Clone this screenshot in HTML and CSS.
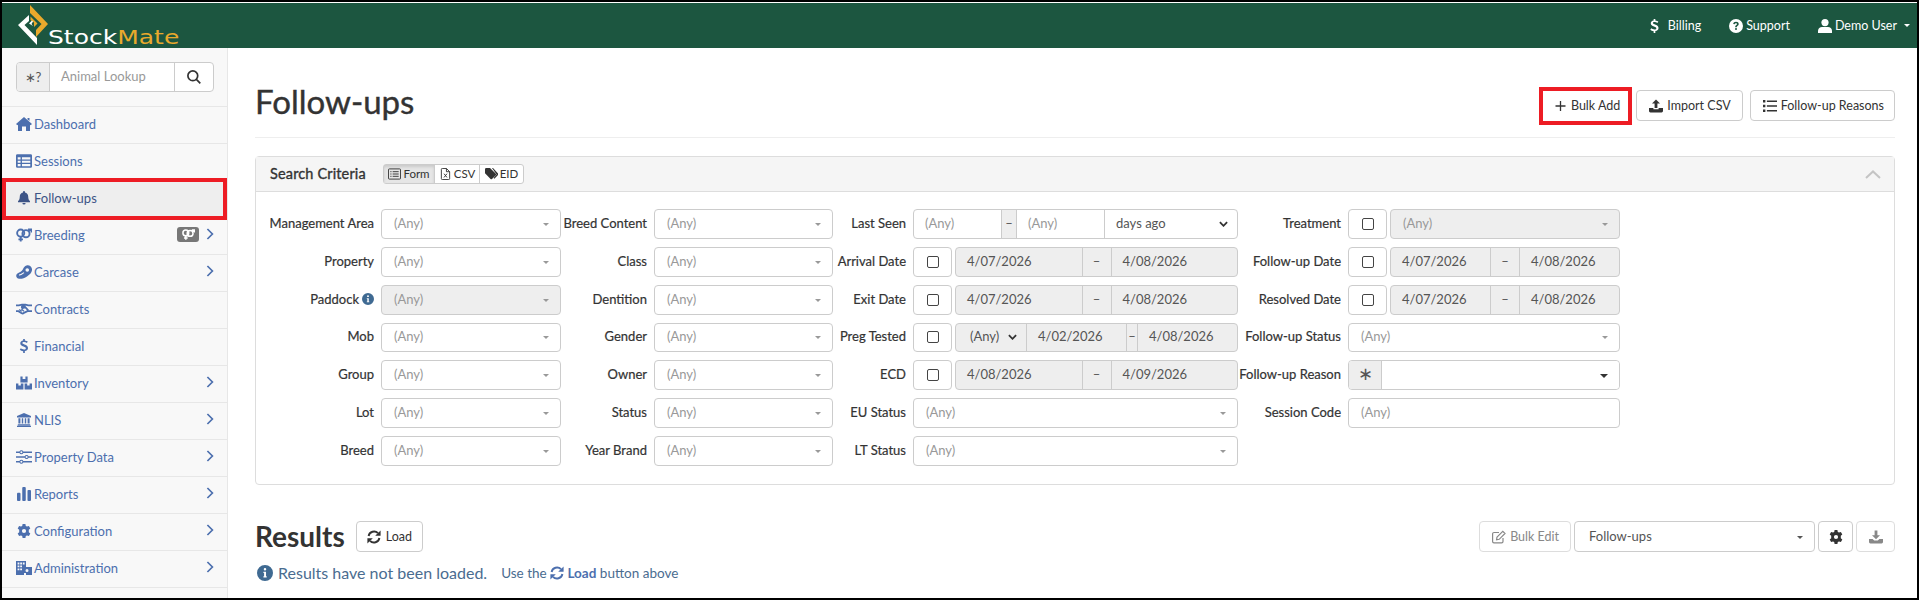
FILE: index.html
```html
<!DOCTYPE html>
<html lang="en">
<head>
    <meta charset="UTF-8">
    <title>Follow-ups</title>
    <link rel="stylesheet" href="styles.css">
</head>
<body>

<svg class="sprite" xmlns="http://www.w3.org/2000/svg">
    <symbol id="i-home" viewBox="0 0 16 14"><path d="M8 0 L16 7 L14.6 8.3 L14 7.8 V14 H10 V9.5 H6 V14 H2 V7.8 L1.4 8.3 L0 7 Z"/><path d="M11.5 1 H13.5 V4 L11.5 2.4 Z"/></symbol>
    <symbol id="i-table" viewBox="0 0 14 12"><path fill-rule="evenodd" d="M1.2 0 H12.8 A1.2 1.2 0 0 1 14 1.2 V10.8 A1.2 1.2 0 0 1 12.8 12 H1.2 A1.2 1.2 0 0 1 0 10.8 V1.2 A1.2 1.2 0 0 1 1.2 0 Z M1.5 2.8 V4.6 H4 V2.8 Z M5.2 2.8 V4.6 H12.5 V2.8 Z M1.5 5.8 V7.5 H4 V5.8 Z M5.2 5.8 V7.5 H12.5 V5.8 Z M1.5 8.7 V10.5 H4 V8.7 Z M5.2 8.7 V10.5 H12.5 V8.7 Z"/></symbol>
    <symbol id="i-bell" viewBox="0 0 12 14"><path d="M6 0 A1 1 0 0 1 7 1 V1.6 C9 2 10.2 3.6 10.2 5.6 C10.2 8.6 11.2 9.4 12 10.2 V11.2 H0 V10.2 C.8 9.4 1.8 8.6 1.8 5.6 C1.8 3.6 3 2 5 1.6 V1 A1 1 0 0 1 6 0 Z M4.4 12 H7.6 A1.6 1.6 0 0 1 4.4 12 Z"/></symbol>
    <symbol id="i-venus-mars" viewBox="0 0 17 14"><g fill="none" stroke="currentColor" stroke-width="2"><circle cx="5" cy="5" r="3.8"/><path d="M5 8.6 V14 M2.6 11.6 H7.4"/><circle cx="10.6" cy="5.6" r="3.8"/><path d="M13.2 3 L16 .9 M12.8 1 H16.4 V4.4"/></g></symbol>
    <symbol id="i-steak" viewBox="0 0 16 14"><path fill-rule="evenodd" d="M10.5 .5 C13 -.2 15.6 1.4 16 4 C16.4 7 14 9.6 11 11.4 C8 13.2 4.6 14.6 2 13.4 C-.2 12.4 -.4 9.6 1.4 8.4 C4 6.6 5.6 6.6 6.8 4.4 C7.8 2.6 8.6 1 10.5 .5 Z M11.2 3.2 A1.8 1.8 0 1 0 11.3 6.8 A1.8 1.8 0 1 0 11.2 3.2 Z M3 10.4 C4.6 10.6 6.6 9.2 8.4 8 L7.6 7.2 C6 8.4 4.4 9.4 3 9.4 Z"/></symbol>
    <symbol id="i-handshake" viewBox="0 0 17 11"><path fill="none" stroke="currentColor" stroke-width="1.9" d="M0 1.6 H3 L6.4 .9 H10 L13 1.6 H17 M0 7.8 H2.6 L6 10 C7 10.5 7.8 10.2 8.4 9.6 L12.2 7.8 H17 M9.4 .9 L6.4 3 C5.6 3.9 6.8 5 7.9 4.3 L9.6 3.3 L13 7"/><path fill="none" stroke="currentColor" stroke-width="1.4" d="M3.4 6 L6 8 M5.8 5.6 L8.4 8"/></symbol>
    <symbol id="i-dollar" viewBox="0 0 9 15"><path d="M3.6 0 H5.4 V1.6 C6.8 1.7 7.9 2.2 8.6 2.8 L7.6 4.3 C6.8 3.7 5.7 3.3 4.6 3.3 C3.4 3.3 2.8 3.7 2.8 4.3 C2.8 5 3.6 5.3 5 5.8 C7.2 6.5 8.8 7.4 8.8 9.6 C8.8 11.4 7.5 12.6 5.4 12.9 V15 H3.6 V13 C2.2 12.9 .9 12.3 0 11.5 L1.1 10 C2 10.7 3.2 11.2 4.4 11.2 C5.8 11.2 6.5 10.7 6.5 9.9 C6.5 9 5.6 8.7 4 8.1 C2 7.4 .5 6.6 .5 4.6 C.5 3 1.7 1.9 3.6 1.6 Z"/></symbol>
    <symbol id="i-boxes" viewBox="0 0 16 13"><path d="M4.4 0 H6.6 V2.6 H9.4 V0 H11.6 V6 H4.4 Z"/><path d="M0 7 H2.4 V9 H4.8 V7 H7.4 V13 H0 Z"/><path d="M8.6 7 H11.2 V9 H13.6 V7 H16 V13 H8.6 Z"/></symbol>
    <symbol id="i-bank" viewBox="0 0 14 14"><path d="M7 0 L14 3 V4.4 H0 V3 Z"/><path d="M1.4 5.2 H3.4 V10.6 H1.4 Z M4.8 5.2 H6.2 V10.6 H4.8 Z M7.8 5.2 H9.2 V10.6 H7.8 Z M10.6 5.2 H12.6 V10.6 H10.6 Z"/><path d="M.8 11.2 H13.2 V12.4 H.8 Z M0 12.8 H14 V14 H0 Z"/></symbol>
    <symbol id="i-sliders" viewBox="0 0 14 12"><path fill-rule="evenodd" d="M0 1.2 H3 A1.8 1.8 0 0 1 6.4 1.2 H14 V2.4 H6.4 A1.8 1.8 0 0 1 3 2.4 H0 Z M4.7 .9 A.9.9 0 1 0 4.7 2.7 A.9.9 0 1 0 4.7 .9 Z M0 5.4 H7.6 A1.8 1.8 0 0 1 11 5.4 H14 V6.6 H11 A1.8 1.8 0 0 1 7.6 6.6 H0 Z M9.3 5.1 A.9.9 0 1 0 9.3 6.9 A.9.9 0 1 0 9.3 5.1 Z M0 9.6 H3 A1.8 1.8 0 0 1 6.4 9.6 H14 V10.8 H6.4 A1.8 1.8 0 0 1 3 10.8 H0 Z M4.7 9.3 A.9.9 0 1 0 4.7 11.1 A.9.9 0 1 0 4.7 9.3 Z"/></symbol>
    <symbol id="i-chart" viewBox="0 0 12 12"><rect x="0" y="5" width="3" height="7" rx=".8"/><rect x="4.5" y="0" width="3" height="12" rx=".8"/><rect x="9" y="2.5" width="3" height="9.5" rx=".8"/></symbol>
    <symbol id="i-gear" viewBox="0 0 14 14"><path fill-rule="evenodd" d="M5.6 0 H8.4 L8.8 1.9 L10 2.6 L11.9 2 L13.3 4.4 L11.8 5.7 V8.3 L13.3 9.6 L11.9 12 L10 11.4 L8.8 12.1 L8.4 14 H5.6 L5.2 12.1 L4 11.4 L2.1 12 L.7 9.6 L2.2 8.3 V5.7 L.7 4.4 L2.1 2 L4 2.6 L5.2 1.9 Z M7 4.9 A2.1 2.1 0 1 0 7 9.1 A2.1 2.1 0 1 0 7 4.9 Z"/></symbol>
    <symbol id="i-admin" viewBox="0 0 16 14"><path fill-rule="evenodd" d="M0 0 H10 V6 H16 V14 H10 V12 H8 V14 H0 Z M1.6 1.6 V3.4 H3.4 V1.6 Z M4.2 1.6 V3.4 H6 V1.6 Z M6.8 1.6 V3.4 H8.6 V1.6 Z M1.6 4.4 V6.2 H3.4 V4.4 Z M4.2 4.4 V6.2 H6 V4.4 Z M1.6 7.4 V9.2 H3.4 V7.4 Z M4.2 7.4 V9.2 H6 V7.4 Z M11 8 A1.5 1.5 0 1 0 11 11 A1.5 1.5 0 1 0 11 8 Z"/></symbol>
    <symbol id="i-search" viewBox="0 0 14 14"><path fill="none" stroke="currentColor" stroke-width="1.7" d="M5.8 .9 A4.9 4.9 0 1 0 5.8 10.7 A4.9 4.9 0 1 0 5.8 .9 Z M9.4 9.4 L13.3 13.3"/></symbol>
    <symbol id="i-chevron" viewBox="0 0 8 12"><path fill="none" stroke="currentColor" stroke-width="1.7" d="M1.4 1 L6.4 6 L1.4 11"/></symbol>
    <symbol id="i-question" viewBox="0 0 14 14"><path fill-rule="evenodd" d="M7 0 A7 7 0 1 1 7 14 A7 7 0 1 1 7 0 Z M7 2.8 C5.4 2.8 4.4 3.6 4.2 4.9 L5.6 5.2 C5.8 4.6 6.2 4.2 6.9 4.2 C7.6 4.2 8 4.6 8 5 C8 5.5 7.6 5.8 7 6.2 C6.4 6.6 6.2 7 6.2 7.8 V8.2 H7.8 V7.9 C7.8 7.5 8 7.3 8.5 7 C9.2 6.5 9.7 5.9 9.7 5 C9.7 3.7 8.6 2.8 7 2.8 Z M7 9 A1 1 0 1 0 7 11 A1 1 0 1 0 7 9 Z"/></symbol>
    <symbol id="i-user" viewBox="0 0 14 14"><circle cx="7" cy="3.6" r="3.6"/><path d="M0 14 V12 C0 9.6 2 8 4 8 H10 C12 8 14 9.6 14 12 V14 Z"/></symbol>
    <symbol id="i-info" viewBox="0 0 14 14"><path fill-rule="evenodd" d="M7 0 A7 7 0 1 1 7 14 A7 7 0 1 1 7 0 Z M7 2.6 A1.1 1.1 0 1 0 7 4.8 A1.1 1.1 0 1 0 7 2.6 Z M5.6 6 V7.1 H6.2 V9.8 H5.6 V10.9 H8.5 V9.8 H7.9 V6 Z"/></symbol>
    <symbol id="i-form" viewBox="0 0 14 12"><path fill="none" stroke="currentColor" d="M1.5.5 H12.5 A1 1 0 0 1 13.5 1.5 V10.5 A1 1 0 0 1 12.5 11.5 H1.5 A1 1 0 0 1 .5 10.5 V1.5 A1 1 0 0 1 1.5.5 Z M2.5 3.5 H3.8 M5 3.5 H11.5 M2.5 6 H3.8 M5 6 H11.5 M2.5 8.5 H3.8 M5 8.5 H11.5"/></symbol>
    <symbol id="i-csv" viewBox="0 0 10 13"><path fill="none" stroke="currentColor" d="M.5 1.5 A1 1 0 0 1 1.5.5 H6 L9.5 4 V11.5 A1 1 0 0 1 8.5 12.5 H1.5 A1 1 0 0 1 .5 11.5 Z M6 .5 V4 H9.5 M3.4 6.2 L6.6 10.2 M6.6 6.2 L3.4 10.2"/></symbol>
    <symbol id="i-tag" viewBox="0 0 13 12"><path d="M0 1.2 A1.2 1.2 0 0 1 1.2 0 H5 L10.8 5.8 A1 1 0 0 1 10.8 7.2 L7 11 A1 1 0 0 1 5.6 11 L0 5.2 Z"/><path d="M7 0 H8 L13 5.4 A1.4 1.4 0 0 1 13 7 L9.4 10.8 L8.6 10 L11.6 6.4 Z"/></symbol>
    <symbol id="i-plus" viewBox="0 0 11 11"><path fill="none" stroke="currentColor" stroke-width="1.3" d="M5.5 .5 V10.5 M.5 5.5 H10.5"/></symbol>
    <symbol id="i-upload" viewBox="0 0 14 13"><path d="M7 0 L11 4 H8.4 V8.6 H5.6 V4 H3 Z"/><path d="M0 8.6 H4.4 V9.8 H9.6 V8.6 H14 V11.6 A1.4 1.4 0 0 1 12.6 13 H1.4 A1.4 1.4 0 0 1 0 11.6 Z"/></symbol>
    <symbol id="i-list" viewBox="0 0 13 11"><path d="M0 0 H2.2 V2.2 H0 Z M0 4.4 H2.2 V6.6 H0 Z M0 8.8 H2.2 V11 H0 Z M3.6 .4 H13 V1.9 H3.6 Z M3.6 4.8 H13 V6.3 H3.6 Z M3.6 9.2 H13 V10.7 H3.6 Z"/></symbol>
    <symbol id="i-sync" viewBox="0 0 14 14"><path fill="none" stroke="currentColor" stroke-width="1.9" d="M1.6 6 A5.5 5.5 0 0 1 11 3.2 M12.4 8 A5.5 5.5 0 0 1 3 10.8"/><path d="M13.6 .4 V5.8 H8.2 Z M.4 13.6 V8.2 H5.8 Z"/></symbol>
    <symbol id="i-edit" viewBox="0 0 14 13"><path fill="none" stroke="currentColor" stroke-width="1.2" d="M11 7.6 V11 A1.4 1.4 0 0 1 9.6 12.4 H2 A1.4 1.4 0 0 1 .6 11 V3.4 A1.4 1.4 0 0 1 2 2 H7 M5 6.6 L10.8 .8 L13 3 L7.2 8.8 L4.6 9.2 Z"/></symbol>
    <symbol id="i-download" viewBox="0 0 14 13"><path d="M5.6 0 H8.4 V4.8 H11 L7 8.8 L3 4.8 H5.6 Z"/><path d="M0 8.6 H3.6 L5.2 10 H8.8 L10.4 8.6 H14 V11.6 A1.4 1.4 0 0 1 12.6 13 H1.4 A1.4 1.4 0 0 1 0 11.6 Z"/></symbol>
</svg>

<div class="frame">
    <header class="topbar">
        <a class="brand" href="#">
            <svg class="brand-mark" viewBox="0 0 31 42">
                <path fill="#e9a92c" d="M12 1 L30 20 L18 33 L18 26 L23.5 20 L12 9 Z"/>
                <path fill="#ffffff" d="M0 21 L11 11 L11 17 L6.5 21 L19 34 L19 41 Z"/>
                <path fill="#e9a92c" d="M12.5 12.5 L19.5 19.5 L16 23 L16 18.5 L12.5 16 Z"/>
                <path fill="#ffffff" d="M11 19.5 L14 16.5 L15 17.5 L13.5 20 L15 22 Z"/>
            </svg>
            <span class="brand-name">Stock<span class="brand-accent">Mate</span></span>
        </a>
        <nav class="topnav">
            <a href="#"><svg class="icon dollar-sm"><use href="#i-dollar"/></svg><span>Billing</span></a>
            <a href="#"><svg class="icon"><use href="#i-question"/></svg>Support</a>
            <a href="#"><svg class="icon"><use href="#i-user"/></svg>Demo User<i class="caret"></i></a>
        </nav>
    </header>

    <div class="shell">
        <aside class="sidebar">
            <div class="lookup">
                <span class="lookup-addon">&#8727;?</span>
                <span class="lookup-input">Animal Lookup</span>
                <span class="lookup-btn"><svg class="icon"><use href="#i-search"/></svg></span>
            </div>
            <ul class="menu">
                <li><a href="#"><svg class="icon"><use href="#i-home"/></svg>Dashboard</a></li>
                <li><a href="#"><svg class="icon"><use href="#i-table"/></svg>Sessions</a></li>
                <li class="active"><a href="#"><svg class="icon"><use href="#i-bell"/></svg>Follow-ups</a></li>
                <li><a href="#"><svg class="icon"><use href="#i-venus-mars"/></svg>Breeding<span class="menu-badge"><svg class="icon"><use href="#i-venus-mars"/></svg></span><svg class="chevron"><use href="#i-chevron"/></svg></a></li>
                <li><a href="#"><svg class="icon"><use href="#i-steak"/></svg>Carcase<svg class="chevron"><use href="#i-chevron"/></svg></a></li>
                <li><a href="#"><svg class="icon"><use href="#i-handshake"/></svg>Contracts</a></li>
                <li><a href="#"><svg class="icon"><use href="#i-dollar"/></svg>Financial</a></li>
                <li><a href="#"><svg class="icon"><use href="#i-boxes"/></svg>Inventory<svg class="chevron"><use href="#i-chevron"/></svg></a></li>
                <li><a href="#"><svg class="icon"><use href="#i-bank"/></svg>NLIS<svg class="chevron"><use href="#i-chevron"/></svg></a></li>
                <li><a href="#"><svg class="icon"><use href="#i-sliders"/></svg>Property Data<svg class="chevron"><use href="#i-chevron"/></svg></a></li>
                <li><a href="#"><svg class="icon"><use href="#i-chart"/></svg>Reports<svg class="chevron"><use href="#i-chevron"/></svg></a></li>
                <li><a href="#"><svg class="icon"><use href="#i-gear"/></svg>Configuration<svg class="chevron"><use href="#i-chevron"/></svg></a></li>
                <li><a href="#"><svg class="icon"><use href="#i-admin"/></svg>Administration<svg class="chevron"><use href="#i-chevron"/></svg></a></li>
            </ul>
        </aside>

        <main class="content">
            <div class="page-header">
                <h1>Follow-ups</h1>
                <div class="page-actions">
                    <button class="btn btn-flagged"><svg class="icon"><use href="#i-plus"/></svg>Bulk Add</button>
                    <button class="btn"><svg class="icon"><use href="#i-upload"/></svg>Import CSV</button>
                    <button class="btn btn-reasons"><svg class="icon"><use href="#i-list"/></svg>Follow-up Reasons</button>
                </div>
            </div>

            <section class="panel">
                <div class="panel-heading">
                    <span class="panel-title">Search Criteria</span>
                    <div class="tabs">
                        <span class="tab tab-on"><svg class="icon"><use href="#i-form"/></svg>Form</span>
                        <span class="tab tab-csv"><svg class="icon"><use href="#i-csv"/></svg>CSV</span>
                        <span class="tab tab-eid"><svg class="icon"><use href="#i-tag"/></svg>EID</span>
                    </div>
                    <svg class="panel-toggle" viewBox="0 0 16 9"><path fill="none" stroke="currentColor" stroke-width="2" d="M1 8 L8 1.4 L15 8"/></svg>
                </div>
                <div class="criteria">
                    <label>Management Area</label><div class="pick">(Any)</div>
                    <label>Breed Content</label><div class="pick">(Any)</div>
                    <label>Last Seen</label>
                    <div class="group">
                        <span class="cell ph w-last">(Any)</span><span class="dash d-last">&ndash;</span><span class="cell ph w-last">(Any)</span><span class="cell native">days ago<svg class="native-arrow" viewBox="0 0 10 6"><path fill="none" stroke="currentColor" stroke-width="2" d="M1 1 L5 5 L9 1"/></svg></span>
                    </div>
                    <label>Treatment</label>
                    <div class="with-check"><span class="check"><i></i></span><div class="pick off">(Any)</div></div>

                    <label>Property</label><div class="pick">(Any)</div>
                    <label>Class</label><div class="pick">(Any)</div>
                    <label>Arrival Date</label>
                    <div class="with-check"><span class="check"><i></i></span><div class="group off"><span class="cell">4/07/2026</span><span class="dash">&ndash;</span><span class="cell">4/08/2026</span></div></div>
                    <label>Follow-up Date</label>
                    <div class="with-check"><span class="check"><i></i></span><div class="group off"><span class="cell">4/07/2026</span><span class="dash">&ndash;</span><span class="cell">4/08/2026</span></div></div>

                    <label>Paddock <svg class="icon label-info"><use href="#i-info"/></svg></label><div class="pick off">(Any)</div>
                    <label>Dentition</label><div class="pick">(Any)</div>
                    <label>Exit Date</label>
                    <div class="with-check"><span class="check"><i></i></span><div class="group off"><span class="cell">4/07/2026</span><span class="dash">&ndash;</span><span class="cell">4/08/2026</span></div></div>
                    <label>Resolved Date</label>
                    <div class="with-check"><span class="check"><i></i></span><div class="group off"><span class="cell">4/07/2026</span><span class="dash">&ndash;</span><span class="cell">4/08/2026</span></div></div>

                    <label>Mob</label><div class="pick">(Any)</div>
                    <label>Gender</label><div class="pick">(Any)</div>
                    <label>Preg Tested</label>
                    <div class="with-check"><span class="check"><i></i></span><div class="group off preg"><span class="cell preg-any">(Any)<svg class="native-arrow" viewBox="0 0 10 6"><path fill="none" stroke="currentColor" stroke-width="2" d="M1 1 L5 5 L9 1"/></svg></span><span class="cell">4/02/2026</span><span class="dash">&ndash;</span><span class="cell">4/08/2026</span></div></div>
                    <label>Follow-up Status</label><div class="pick">(Any)</div>

                    <label>Group</label><div class="pick">(Any)</div>
                    <label>Owner</label><div class="pick">(Any)</div>
                    <label>ECD</label>
                    <div class="with-check"><span class="check"><i></i></span><div class="group off"><span class="cell">4/08/2026</span><span class="dash">&ndash;</span><span class="cell">4/09/2026</span></div></div>
                    <label>Follow-up Reason</label>
                    <div class="group"><span class="dash star">&#8727;</span><div class="pick bare dark"></div></div>

                    <label>Lot</label><div class="pick">(Any)</div>
                    <label>Status</label><div class="pick">(Any)</div>
                    <label>EU Status</label><div class="pick">(Any)</div>
                    <label>Session Code</label><div class="pick plain">(Any)</div>

                    <label>Breed</label><div class="pick">(Any)</div>
                    <label>Year Brand</label><div class="pick">(Any)</div>
                    <label>LT Status</label><div class="pick">(Any)</div>
                </div>
            </section>

            <div class="results-head">
                <h2>Results</h2>
                <button class="btn btn-load"><svg class="icon"><use href="#i-sync"/></svg>Load</button>
                <div class="results-tools">
                    <button class="btn btn-off"><svg class="icon"><use href="#i-edit"/></svg>Bulk Edit</button>
                    <div class="pick view-pick">Follow-ups</div>
                    <button class="btn btn-square"><svg class="icon"><use href="#i-gear"/></svg></button>
                    <button class="btn btn-square btn-wide btn-off"><svg class="icon"><use href="#i-download"/></svg></button>
                </div>
            </div>
            <p class="notice">
                <svg class="icon notice-icon"><use href="#i-info"/></svg>
                <span class="notice-main">Results have not been loaded.</span>
                <span class="notice-hint">Use the <a href="#"><svg class="icon"><use href="#i-sync"/></svg> Load</a> button above</span>
            </p>
        </main>
    </div>
</div>

</body>
</html>
```

FILE: styles.css
```css
* {
    box-sizing: border-box;
}
html, body {
    margin: 0;
    height: 100%;
    overflow: hidden;
}
body {
    font-family: Lato, "Open Sans", sans-serif;
    font-size: 13px;
    line-height: 20px;
    color: #333333;
    background: #000000;
}
a {
    color: inherit;
    text-decoration: none;
}
.sprite {
    display: none;
}
.icon {
    width: 14px;
    height: 14px;
    fill: currentColor;
    flex: none;
}

.frame {
    display: flex;
    flex-direction: column;
    height: 596px;
    margin: 2px 2px 0 2px;
    background: #ffffff;
    border-top: 1px solid #ffffff;
    overflow: hidden;
}

/* header */
.topbar {
    display: flex;
    justify-content: space-between;
    align-items: center;
    height: 45px;
    flex: none;
    background: #1c5640;
    color: #ffffff;
}
.brand {
    display: flex;
    align-items: flex-end;
    height: 45px;
    padding-left: 16px;
}
.brand-mark {
    width: 31px;
    height: 42px;
    margin-bottom: 2px;
}
.brand-name {
    font-family: "DejaVu Sans", sans-serif;
    font-size: 20px;
    line-height: 20px;
    margin-left: -1px;
    margin-bottom: 1px;
    transform: scaleX(1.25);
    transform-origin: left center;
}
.brand-accent {
    color: #e9a92c;
}
.topnav {
    display: flex;
    align-items: center;
    padding-right: 7px;
    font-size: 12.5px;
}
.topnav a {
    display: flex;
    align-items: center;
    gap: 3px;
    margin-left: 28px;
}
.topnav .dollar-sm {
    width: 9px;
    margin-right: 6px;
}
.caret {
    width: 0;
    height: 0;
    margin-left: 4px;
    border-left: 3px solid transparent;
    border-right: 3px solid transparent;
    border-top: 3px solid #ffffff;
}

/* sidebar */
.shell {
    display: flex;
    flex: 1;
    min-height: 0;
}
.sidebar {
    width: 226px;
    flex: none;
    background: #f8f8f8;
    border-right: 1px solid #e7e7e7;
}
.lookup {
    display: flex;
    height: 30px;
    margin: 14px 13px 0 14px;
    border: 1px solid #cccccc;
    border-radius: 4px;
    background: #ffffff;
    color: #999999;
}
.lookup-addon {
    width: 33px;
    display: flex;
    align-items: center;
    justify-content: center;
    background: #eeeeee;
    border-right: 1px solid #cccccc;
    color: #555555;
    border-radius: 3px 0 0 3px;
}
.lookup-input {
    flex: 1;
    padding: 3px 11px;
}
.lookup-btn {
    width: 39px;
    display: flex;
    align-items: center;
    justify-content: center;
    border-left: 1px solid #cccccc;
    color: #333333;
}
.menu {
    list-style: none;
    margin: 14px 0 0;
    padding: 0;
    border-top: 1px solid #e7e7e7;
}
.menu li {
    position: relative;
    height: 37px;
    border-bottom: 1px solid #e7e7e7;
}
.menu a {
    display: flex;
    align-items: center;
    height: 36px;
    padding: 0 14px 3px;
    color: #4c6fae;
}
.menu .icon {
    width: 16px;
    margin-right: 2px;
}
.menu li.active a {
    background: #eeeeee;
    color: #3d5486;
}
.menu li.active::after {
    content: "";
    position: absolute;
    left: 0;
    right: 0;
    top: -3px;
    bottom: -3px;
    border: 4px solid #ed1c24;
    pointer-events: none;
}
.menu-badge {
    display: flex;
    align-items: center;
    justify-content: center;
    width: 22px;
    height: 15px;
    margin-left: auto;
    border-radius: 3px;
    background: #777777;
    color: #ffffff;
}
.menu .menu-badge .icon {
    width: 13px;
    height: 11px;
    margin: 0;
}
.chevron {
    width: 8px;
    height: 12px;
    margin-left: auto;
    margin-top: -2px;
    margin-right: -1px;
}
.menu-badge + .chevron {
    margin-left: 7px;
}

/* main column */
.content {
    flex: 1;
    min-width: 0;
    padding: 0 22px 0 27px;
}
.page-header {
    display: flex;
    justify-content: space-between;
    align-items: center;
    height: 90px;
    padding-top: 26px;
    border-bottom: 1px solid #eeeeee;
}
h1 {
    margin: 0 0 10px;
    font-size: 33px;
    line-height: 40px;
    font-weight: 400;
    color: #333333;
    -webkit-text-stroke: 0.4px;
}
.page-actions {
    display: flex;
    gap: 7px;
}
.btn {
    display: inline-flex;
    align-items: center;
    gap: 4px;
    height: 31px;
    padding: 0 11px 0 12px;
    font-family: inherit;
    font-size: 12.5px;
    color: #333333;
    background: #ffffff;
    border: 1px solid #cccccc;
    border-radius: 4px;
}
.btn-reasons {
    padding-right: 10px;
}
.btn-flagged {
    position: relative;
    gap: 5px;
    padding: 0 7px 0 11px;
    margin-right: 1px;
    border-color: transparent;
}
.btn-flagged::after {
    content: "";
    position: absolute;
    left: -5px;
    right: -5px;
    top: -4px;
    bottom: -5px;
    border: 4px solid #ed1c24;
}
.btn-flagged .icon {
    width: 11px;
}

/* search panel */
.panel {
    margin-top: 18px;
    height: 329px;
    border: 1px solid #dddddd;
    border-radius: 4px;
}
.panel-heading {
    display: flex;
    align-items: center;
    height: 35px;
    padding: 0 14px;
    background: #f5f5f5;
    border-bottom: 1px solid #dddddd;
}
.panel-title {
    width: 113px;
    font-size: 14.5px;
    letter-spacing: 0.15px;
    -webkit-text-stroke: 0.35px;
}
.tabs {
    display: flex;
    height: 20px;
    font-size: 11.5px;
    background: #ffffff;
    border: 1px solid #cccccc;
    border-radius: 3px;
}
.tab {
    display: flex;
    align-items: center;
    justify-content: center;
    gap: 2px;
    width: 51px;
    border-right: 1px solid #cccccc;
}
.tab-csv {
    width: 45px;
}
.tab-eid {
    width: 43px;
    border-right: none;
}
.tab-on {
    background: #e6e6e6;
    box-shadow: inset 0 2px 3px rgba(0, 0, 0, 0.12);
}
.tab .icon {
    width: 13px;
    height: 12px;
}
.panel-toggle {
    width: 16px;
    height: 9px;
    margin-left: auto;
    margin-right: -1px;
    color: #c4c4c4;
}
.criteria {
    display: grid;
    grid-template-columns: 113px 180px 93px 179px 80px 325px 110px 272px;
    grid-auto-rows: 29.85px;
    row-gap: 8px;
    padding: 17px 0 0 12px;
}
.criteria label {
    display: flex;
    align-items: center;
    justify-content: flex-end;
    gap: 3px;
    padding: 0 7px 2px 0;
    white-space: nowrap;
    -webkit-text-stroke: 0.2px;
}
.label-info {
    width: 12px;
    height: 12px;
    color: #3f6a92;
}
.pick {
    position: relative;
    display: flex;
    align-items: center;
    height: 100%;
    padding: 0 12px 2px;
    color: #999999;
    background: #ffffff;
    border: 1px solid #cccccc;
    border-radius: 4px;
}
.pick::after {
    content: "";
    position: absolute;
    right: 11px;
    top: 50%;
    margin-top: -1px;
    border-left: 3px solid transparent;
    border-right: 3px solid transparent;
    border-top: 3px solid #999999;
}
.pick.off {
    background: #eeeeee;
}
.pick.plain::after {
    display: none;
}
.pick.bare {
    flex: 1;
    border: none;
    border-radius: 0 3px 3px 0;
}
.pick.dark::after {
    border-top-color: #333333;
    border-left-width: 4px;
    border-right-width: 4px;
    border-top-width: 4px;
}
.with-check {
    display: flex;
    gap: 3px;
    height: 100%;
}
.with-check > .pick, .with-check > .group {
    flex: 1;
    min-width: 0;
}
.check {
    display: flex;
    align-items: center;
    justify-content: center;
    width: 39px;
    flex: none;
    height: 100%;
    border: 1px solid #cccccc;
    border-radius: 4px;
    background: #ffffff;
}
.check i {
    display: block;
    width: 12px;
    height: 12px;
    border: 1.5px solid #444444;
    border-radius: 2px;
}
.group {
    display: flex;
    height: 100%;
    border: 1px solid #cccccc;
    border-radius: 4px;
    background: #ffffff;
    overflow: hidden;
}
.group.off {
    background: #eeeeee;
    color: #555555;
}
.cell {
    flex: 1;
    display: flex;
    align-items: center;
    padding: 0 11px 2px;
    min-width: 0;
    color: #555555;
}
.dash {
    display: flex;
    align-items: center;
    justify-content: center;
    flex: none;
    width: 30px;
    padding-bottom: 2px;
    background: #eeeeee;
    border-left: 1px solid #cccccc;
    border-right: 1px solid #cccccc;
    color: #555555;
}
.ph {
    color: #999999;
}
.w-last {
    flex: none;
    width: 87px;
}
.d-last {
    width: 16px;
}
.native {
    position: relative;
    flex: 1;
    border-left: 1px solid #cccccc;
}
.native-arrow {
    position: absolute;
    right: 9px;
    top: 50%;
    margin-top: -3px;
    width: 9px;
    height: 6px;
    color: #333333;
}
.preg .preg-any {
    position: relative;
    flex: none;
    width: 71px;
    padding-left: 14px;
    border-right: 1px solid #cccccc;
}
.preg .dash {
    width: 12px;
}
.star {
    width: 33px;
    padding-bottom: 5px;
    border-left: none;
    font-size: 18px;
}

/* results */
.results-head {
    display: flex;
    align-items: center;
    margin-top: 36px;
    height: 31px;
}
h2 {
    margin: 0 11px 0 0;
    font-size: 28px;
    line-height: 31px;
    font-weight: 700;
}
.btn-load {
    gap: 5px;
    padding: 0 10px;
}
.results-tools {
    display: flex;
    gap: 3px;
    height: 31px;
    margin-left: auto;
}
.btn-off {
    color: #888888;
    border-color: #dddddd;
}
.btn-square {
    width: 35px;
    justify-content: center;
    padding: 0;
}
.btn-wide {
    width: 39px;
}
.view-pick {
    width: 241px;
    color: #555555;
    padding-left: 14px;
}
.view-pick::after {
    border-top-color: #555555;
}
.notice {
    display: flex;
    align-items: center;
    gap: 5px;
    margin: 11px 0 0 2px;
    height: 20px;
    color: #4a6c90;
}
.notice-icon {
    width: 16px;
    height: 16px;
    color: #3f6a92;
}
.notice-main {
    font-size: 16px;
    margin-right: 9px;
}
.notice-hint {
    font-size: 13.5px;
}
.notice-hint a {
    font-weight: 700;
    color: #4c6fae;
}
.notice-hint .icon {
    vertical-align: -2px;
}
```
